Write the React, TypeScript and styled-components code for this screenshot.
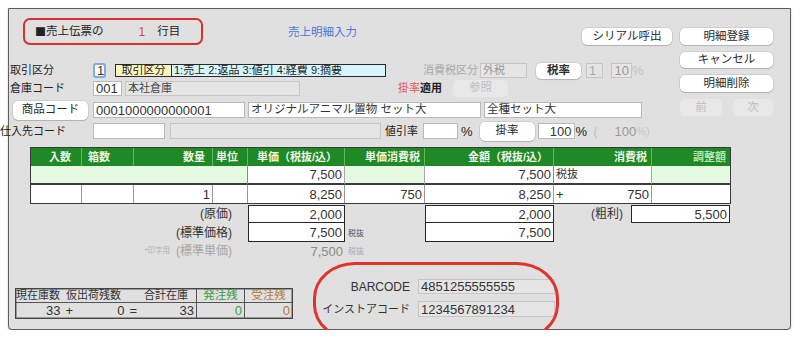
import React from "react";
import styled, { createGlobalStyle } from "styled-components";

const sans = `"Liberation Sans", "Noto Sans CJK JP", sans-serif`;
const cols = "51px 52px 79px 35px 97px 80px 129px 98px 78px";

const GlobalStyle = createGlobalStyle`
  html, body {
    margin: 0;
    padding: 0;
    background: #fff;
  }
  body {
    font-family: ${sans};
    color: #222;
  }
  * {
    box-sizing: border-box;
  }
`;

const Panel = styled.div`
  position: relative;
  margin: 8px 0 0 8px;
  width: 783px;
  height: 322px;
  background: #e0e0e0;
  border: 1px solid #5e5e5e;
  border-radius: 0 0 4px 4px;
  box-shadow: 0 1px 2px rgba(0, 0, 0, 0.25);
  display: flex;
  flex-direction: column;
`;

const TopArea = styled.div`
  flex: none;
  display: flex;
  height: 131px;
`;

const MainCol = styled.div`
  width: 663px;
  display: flex;
  flex-direction: column;
`;

const SideCol = styled.div`
  width: 93px;
  margin-left: 8px;
  padding-top: 19px;
  display: flex;
  flex-direction: column;
`;

const HeaderRow = styled.div`
  margin-top: 9px;
  height: 27px;
  padding-left: 14px;
  display: flex;
  align-items: center;
`;

const SlipBadge = styled.div`
  flex: none;
  width: 180px;
  height: 27px;
  display: flex;
  align-items: center;
  padding-left: 10px;
  border: 2px solid #d8302c;
  border-radius: 7px;
  font-size: 11.5px;
  line-height: 1;
`;

const Square = styled.span`
  font-family: "Noto Sans CJK JP", sans-serif;
  font-size: 11px;
`;

const RowNo = styled.span`
  margin: 0 12px 0 35px;
  color: #d84a44;
  font-size: 12px;
`;

const ScreenTitle = styled.span`
  margin-left: 85px;
  padding-top: 3px;
  color: #4a78dc;
  font-size: 11.5px;
  line-height: 1;
`;

const FormRow = styled.div<{ $h: number; $mt?: number }>`
  display: flex;
  align-items: center;
  height: ${(p) => p.$h}px;
  margin-top: ${(p) => p.$mt ?? 0}px;
`;

const Label = styled.span<{
  $w?: number;
  $ml?: number;
  $pl?: number;
  $pr?: number;
  $align?: "left" | "right";
  $color?: string;
  $size?: number;
  $bold?: boolean;
}>`
  flex: none;
  ${(p) => (p.$w ? `width: ${p.$w}px;` : "")}
  margin-left: ${(p) => p.$ml ?? 0}px;
  padding-left: ${(p) => p.$pl ?? 0}px;
  padding-right: ${(p) => p.$pr ?? 0}px;
  text-align: ${(p) => p.$align ?? "left"};
  color: ${(p) => p.$color ?? "#222"};
  font-size: ${(p) => p.$size ?? 11}px;
  font-weight: ${(p) => (p.$bold ? 700 : 400)};
  line-height: 1;
  white-space: nowrap;
`;

const Field = styled.div<{
  $w: number;
  $h?: number;
  $ml?: number;
  $tone?: "white" | "gray";
  $align?: "left" | "right";
  $color?: string;
  $size?: number;
}>`
  flex: none;
  width: ${(p) => p.$w}px;
  height: ${(p) => p.$h ?? 16}px;
  margin-left: ${(p) => p.$ml ?? 0}px;
  display: flex;
  align-items: center;
  justify-content: ${(p) => (p.$align === "right" ? "flex-end" : "flex-start")};
  padding: 0 2px;
  background: ${(p) => (p.$tone === "gray" ? "#e5e5e5" : "#fff")};
  border: 1px solid ${(p) => (p.$tone === "gray" ? "#c6c6c6" : "#b9b9b9")};
  color: ${(p) => p.$color ?? "#333"};
  font-size: ${(p) => p.$size ?? 13}px;
  line-height: 1;
  white-space: nowrap;
  overflow: hidden;
`;

const FocusField = styled.div`
  flex: none;
  width: 13px;
  height: 15px;
  display: flex;
  align-items: center;
  padding-left: 2px;
  background: #fff;
  border: 2px solid #7eaaea;
  border-radius: 3px;
  font-size: 13px;
  line-height: 1;
  color: #333;
`;

const Btn = styled.div<{
  $w: number;
  $h?: number;
  $ml?: number;
  $mt?: number;
  $off?: boolean;
  $bold?: boolean;
}>`
  flex: none;
  width: ${(p) => p.$w}px;
  height: ${(p) => p.$h ?? 17}px;
  margin-left: ${(p) => p.$ml ?? 0}px;
  margin-top: ${(p) => p.$mt ?? 0}px;
  display: flex;
  align-items: center;
  justify-content: center;
  background: ${(p) => (p.$off ? "#e8e8e8" : "#fff")};
  border-radius: 5px;
  box-shadow: ${(p) =>
    p.$off ? "none" : "0 0 0 0.5px rgba(0,0,0,0.16), 0 1px 1px rgba(0,0,0,0.14)"};
  color: ${(p) => (p.$off ? "#bdbdbd" : "#2a2a2a")};
  font-size: 11.5px;
  font-weight: ${(p) => (p.$bold ? 700 : 400)};
  line-height: 1;
  white-space: nowrap;
`;

const SerialBtn = styled(Btn)`
  margin-left: auto;
  align-self: flex-end;
`;

const NavRow = styled.div`
  display: flex;
  margin-top: 7px;
`;

const KubunBox = styled.div`
  flex: none;
  display: flex;
  width: 271px;
  height: 13px;
  margin-left: 9px;
  border: 1px solid #2a2a2a;
  font-size: 11px;
  line-height: 11px;
  overflow: hidden;
`;

const KubunTag = styled.span`
  width: 56px;
  text-align: center;
  background: #fcf5c2;
  border-right: 1px solid #2a2a2a;
`;

const KubunList = styled.span`
  flex: 1;
  padding-left: 2px;
  background: #d6f6fb;
  white-space: nowrap;
`;

const RedText = styled.span`
  color: #e35a52;
  font-size: 11px;
  line-height: 1;
`;

const Table = styled.div`
  flex: none;
  margin: 7px 0 0 21px;
  display: grid;
  grid-template-columns: ${cols};
  grid-template-rows: 18px 19px 18px;
  width: max-content;
  border: 1px solid #3a3a3a;
`;

const HeadCell = styled.div<{ $pr?: number; $start?: boolean; $dim?: boolean; $last?: boolean }>`
  display: flex;
  align-items: center;
  justify-content: ${(p) => (p.$start ? "flex-start" : "flex-end")};
  padding: 0 ${(p) => p.$pr ?? 5}px 0 ${(p) => (p.$start ? 6 : 0)}px;
  background: #1f8a25;
  border-right: ${(p) => (p.$last ? "0" : "1px solid #63b663")};
  color: ${(p) => (p.$dim ? "#b7e3b2" : "#eef6ea")};
  font-size: 11px;
  font-weight: 700;
  line-height: 1;
  white-space: nowrap;
`;

const BodyCell = styled.div<{
  $bg?: string;
  $span?: number;
  $line?: string;
  $first?: boolean;
  $between?: boolean;
}>`
  grid-column: span ${(p) => p.$span ?? 1};
  display: flex;
  align-items: center;
  justify-content: ${(p) => (p.$between ? "space-between" : "flex-end")};
  padding: 0 2px;
  background: ${(p) => p.$bg ?? "#fff"};
  border-right: ${(p) => (p.$line ? `1px solid ${p.$line}` : "0")};
  border-bottom: ${(p) => (p.$first ? "2px solid #3c3c3c" : "0")};
  color: #333;
  font-size: 13px;
  line-height: 1;
  white-space: nowrap;
`;

const TaxWord = styled.span`
  font-size: 11px;
`;

const SubGrid = styled.div`
  flex: none;
  margin: 1px 0 0 21px;
  display: grid;
  grid-template-columns: ${cols};
  grid-template-rows: 18px 19px 18px;
  width: max-content;
  border-left: 1px solid transparent;
`;

const SubLabel = styled.div<{ $muted?: boolean }>`
  grid-column: span 4;
  display: flex;
  align-items: center;
  justify-content: flex-end;
  padding-right: 16px;
  color: ${(p) => (p.$muted ? "#a5a5a5" : "#333")};
  font-size: 12px;
  line-height: 1;
  white-space: nowrap;
`;

const PrintNote = styled.span`
  margin-right: 6px;
  color: #b0b0b0;
  font-size: 7.5px;
`;

const ValueBox = styled.div<{ $joined?: boolean; $w?: number }>`
  ${(p) => (p.$w ? `width: ${p.$w}px; flex: none; height: 18px;` : "")}
  display: flex;
  align-items: center;
  justify-content: flex-end;
  padding-right: 2px;
  background: #fff;
  border: 1px solid #262626;
  border-top: ${(p) => (p.$joined ? "0" : "1px solid #262626")};
  color: #333;
  font-size: 13px;
  line-height: 1;
`;

const PlainValue = styled.div`
  display: flex;
  align-items: center;
  justify-content: flex-end;
  padding-right: 2px;
  color: #8a8a8a;
  font-size: 13px;
  line-height: 1;
`;

const TinyTax = styled.div<{ $muted?: boolean }>`
  display: flex;
  align-items: center;
  padding: 2px 0 0 3px;
  color: ${(p) => (p.$muted ? "#aaa" : "#555")};
  font-size: 8px;
  line-height: 1;
`;

const GrossSlot = styled.div`
  grid-column: span 2;
  display: flex;
  align-items: center;
  justify-content: flex-end;
  gap: 8px;
  font-size: 12px;
  line-height: 1;
  color: #333;
`;

const Spacer = styled.div<{ $span: number }>`
  grid-column: span ${(p) => p.$span};
`;

const BottomArea = styled.div`
  flex: 1;
  display: flex;
  align-items: flex-start;
`;

const StockTable = styled.div`
  flex: none;
  margin: 28px 0 0 6px;
  display: grid;
  grid-template-columns: 181px 48px 47px;
  grid-template-rows: 14px 15px;
  border: 1px solid #454545;
  box-shadow: inset 0 0 0 1px #9a9a9a;
`;

const StockCell = styled.div<{ $color?: string; $head?: boolean; $last?: boolean }>`
  display: flex;
  align-items: center;
  justify-content: ${(p) => (p.$head ? "center" : "flex-end")};
  padding-right: ${(p) => (p.$head ? 0 : 2)}px;
  border-right: ${(p) => (p.$last ? "0" : "1px solid #555")};
  border-bottom: ${(p) => (p.$head ? "1px solid #555" : "0")};
  color: ${(p) => p.$color ?? "#333"};
  font-size: ${(p) => (p.$head ? 11.5 : 13)}px;
  line-height: 1;
  white-space: nowrap;
`;

const StockSplit = styled.div<{ $cols: string; $head?: boolean }>`
  display: grid;
  grid-template-columns: ${(p) => p.$cols};
  align-items: center;
  border-right: 1px solid #555;
  border-bottom: ${(p) => (p.$head ? "1px solid #555" : "0")};
  font-size: ${(p) => (p.$head ? 11 : 13)}px;
  line-height: 1;
  color: #333;
  white-space: nowrap;
`;

const SplitPart = styled.span<{ $align?: "left" | "right"; $pr?: number }>`
  text-align: ${(p) => p.$align ?? "right"};
  padding-right: ${(p) => p.$pr ?? 0}px;
`;

const Op = styled.span`
  margin-left: 5px;
`;

const BarcodeBlock = styled.div`
  position: relative;
  flex: none;
  margin: 19px 0 0 20px;
  display: grid;
  grid-template-columns: 97px 137px;
  grid-template-rows: 15px 16px;
  column-gap: 8px;
  row-gap: 7px;
  align-items: center;

  &::before {
    content: "";
    position: absolute;
    left: 0;
    top: -17px;
    width: 240px;
    height: 73px;
    border: 3px solid #e0332b;
    border-radius: 42px / 36px;
    pointer-events: none;
  }
`;

const CodeLabel = styled.span<{ $size: number }>`
  text-align: right;
  font-size: ${(p) => p.$size}px;
  color: #333;
  line-height: 1;
  white-space: nowrap;
`;

export default function App() {
  return (
    <>
      <GlobalStyle />
      <Panel>
        <TopArea>
          <MainCol>
            <HeaderRow>
              <SlipBadge>
                <Square>■</Square>売上伝票の<RowNo>1</RowNo>行目
              </SlipBadge>
              <ScreenTitle>売上明細入力</ScreenTitle>
              <SerialBtn $w={90} $h={17}>
                シリアル呼出
              </SerialBtn>
            </HeaderRow>

            <FormRow $h={17} $mt={17}>
              <Label $w={84} $pl={1}>
                取引区分
              </Label>
              <FocusField>1</FocusField>
              <KubunBox>
                <KubunTag>取引区分</KubunTag>
                <KubunList>1:売上 2:返品 3:値引 4:経費 9:摘要</KubunList>
              </KubunBox>
              <Label $w={94} $pr={2} $align="right" $color="#a8a8a8">
                消費税区分
              </Label>
              <Field $w={47} $h={15} $tone="gray" $color="#999" $size={11}>
                外税
              </Field>
              <Btn $w={45} $h={16} $ml={9} $bold>
                税率
              </Btn>
              <Field $w={17} $h={15} $ml={5} $tone="gray" $color="#aaa">
                1
              </Field>
              <Field $w={21} $h={15} $ml={8} $tone="gray" $align="right" $color="#999">
                10
              </Field>
              <Label $size={13} $color="#c0c0c0">
                %
              </Label>
            </FormRow>

            <FormRow $h={18}>
              <Label $w={84} $pl={1}>
                倉庫コード
              </Label>
              <Field $w={29} $h={15}>
                001
              </Field>
              <Field $w={175} $h={15} $ml={3} $tone="gray" $color="#444" $size={11}>
                本社倉庫
              </Field>
              <Label $ml={98}>
                <RedText>掛率</RedText>
              </Label>
              <Label $bold>適用</Label>
              <Btn $w={55} $h={17} $ml={11} $off>
                参照
              </Btn>
            </FormRow>

            <FormRow $h={20} $mt={3}>
              <Btn $w={75} $h={19} $ml={4}>
                商品コード
              </Btn>
              <Field $w={152} $ml={5}>
                0001000000000001
              </Field>
              <Field $w={233} $ml={3} $size={11.5}>
                オリジナルアニマル置物 セット大
              </Field>
              <Field $w={158} $ml={3} $size={11.5}>
                全種セット大
              </Field>
            </FormRow>

            <FormRow $h={18} $mt={2}>
              <Label $w={93} $ml={-9}>
                仕入先コード
              </Label>
              <Field $w={72} />
              <Field $w={211} $ml={5} $tone="gray" />
              <Label $w={36} $ml={4}>
                値引率
              </Label>
              <Field $w={35} $ml={2} />
              <Label $ml={3} $size={13}>
                %
              </Label>
              <Btn $w={55} $h={19} $ml={7}>
                掛率
              </Btn>
              <Field $w={37} $ml={3} $align="right">
                100
              </Field>
              <Label $ml={1} $size={13}>
                %
              </Label>
              <Label $ml={6} $size={13} $color="#c4c4c4">
                (
              </Label>
              <Label $ml={17} $size={13} $color="#999">
                100
              </Label>
              <Label $size={11} $color="#c8c8c8">
                %)
              </Label>
            </FormRow>
          </MainCol>

          <SideCol>
            <Btn $w={93} $h={17}>
              明細登録
            </Btn>
            <Btn $w={93} $h={16} $mt={7}>
              キャンセル
            </Btn>
            <Btn $w={93} $h={17} $mt={7}>
              明細削除
            </Btn>
            <NavRow>
              <Btn $w={42} $h={17} $off>
                前
              </Btn>
              <Btn $w={40} $h={17} $ml={11} $off>
                次
              </Btn>
            </NavRow>
          </SideCol>
        </TopArea>

        <Table>
          <HeadCell $pr={10}>入数</HeadCell>
          <HeadCell $start>箱数</HeadCell>
          <HeadCell $pr={7}>数量</HeadCell>
          <HeadCell $pr={9}>単位</HeadCell>
          <HeadCell $pr={7}>単価（税抜/込）</HeadCell>
          <HeadCell $pr={4}>単価消費税</HeadCell>
          <HeadCell $pr={5}>金額（税抜/込）</HeadCell>
          <HeadCell $pr={4}>消費税</HeadCell>
          <HeadCell $pr={4} $dim $last>
            調整額
          </HeadCell>

          <BodyCell $span={4} $bg="#e4fbe2" $line="#b26ad0" $first />
          <BodyCell $line="#a8a8a8" $first>
            7,500
          </BodyCell>
          <BodyCell $bg="#e4fbe2" $line="#a8a8a8" $first />
          <BodyCell $line="#8a8a8a" $first>
            7,500
          </BodyCell>
          <BodyCell $line="#a8a8a8" $first $between>
            <TaxWord>税抜</TaxWord>
          </BodyCell>
          <BodyCell $bg="#e4fbe2" $first />

          <BodyCell $line="#9a9a9a" />
          <BodyCell $line="#9a9a9a" />
          <BodyCell $line="#9a9a9a">1</BodyCell>
          <BodyCell $line="#9a9a9a" />
          <BodyCell $line="#9a9a9a">8,250</BodyCell>
          <BodyCell $line="#9a9a9a">750</BodyCell>
          <BodyCell $line="#9a9a9a">8,250</BodyCell>
          <BodyCell $line="#9a9a9a" $between>
            <span>+</span>
            <span>750</span>
          </BodyCell>
          <BodyCell />
        </Table>

        <SubGrid>
          <SubLabel>(原価)</SubLabel>
          <ValueBox>2,000</ValueBox>
          <Spacer $span={1} />
          <ValueBox>2,000</ValueBox>
          <GrossSlot>
            (粗利)
            <ValueBox $w={99}>5,500</ValueBox>
          </GrossSlot>

          <SubLabel>(標準価格)</SubLabel>
          <ValueBox $joined>7,500</ValueBox>
          <TinyTax>税抜</TinyTax>
          <ValueBox $joined>7,500</ValueBox>
          <Spacer $span={2} />

          <SubLabel $muted>
            <PrintNote>*印字用</PrintNote>(標準単価)
          </SubLabel>
          <PlainValue>7,500</PlainValue>
          <TinyTax $muted>税抜</TinyTax>
        </SubGrid>

        <BottomArea>
          <StockTable>
            <StockSplit $cols="50px 70px 61px" $head>
              <SplitPart $align="left">現在庫数</SplitPart>
              <SplitPart $align="left">仮出荷残数</SplitPart>
              <SplitPart $pr={9}>合計在庫</SplitPart>
            </StockSplit>
            <StockCell $head $color="#3f9b3f">
              発注残
            </StockCell>
            <StockCell $head $last $color="#b47a3c">
              受注残
            </StockCell>

            <StockSplit $cols="58px 65px 58px">
              <SplitPart $pr={1}>
                33<Op>+</Op>
              </SplitPart>
              <SplitPart $pr={2}>
                0<Op>=</Op>
              </SplitPart>
              <SplitPart $pr={3}>33</SplitPart>
            </StockSplit>
            <StockCell $color="#3f9b3f">0</StockCell>
            <StockCell $last $color="#b47a3c">
              0
            </StockCell>
          </StockTable>

          <BarcodeBlock>
            <CodeLabel $size={12}>BARCODE</CodeLabel>
            <Field $w={137} $h={15} $tone="gray">
              4851255555555
            </Field>
            <CodeLabel $size={11}>インストアコード</CodeLabel>
            <Field $w={137} $h={16} $tone="gray">
              1234567891234
            </Field>
          </BarcodeBlock>
        </BottomArea>
      </Panel>
    </>
  );
}
